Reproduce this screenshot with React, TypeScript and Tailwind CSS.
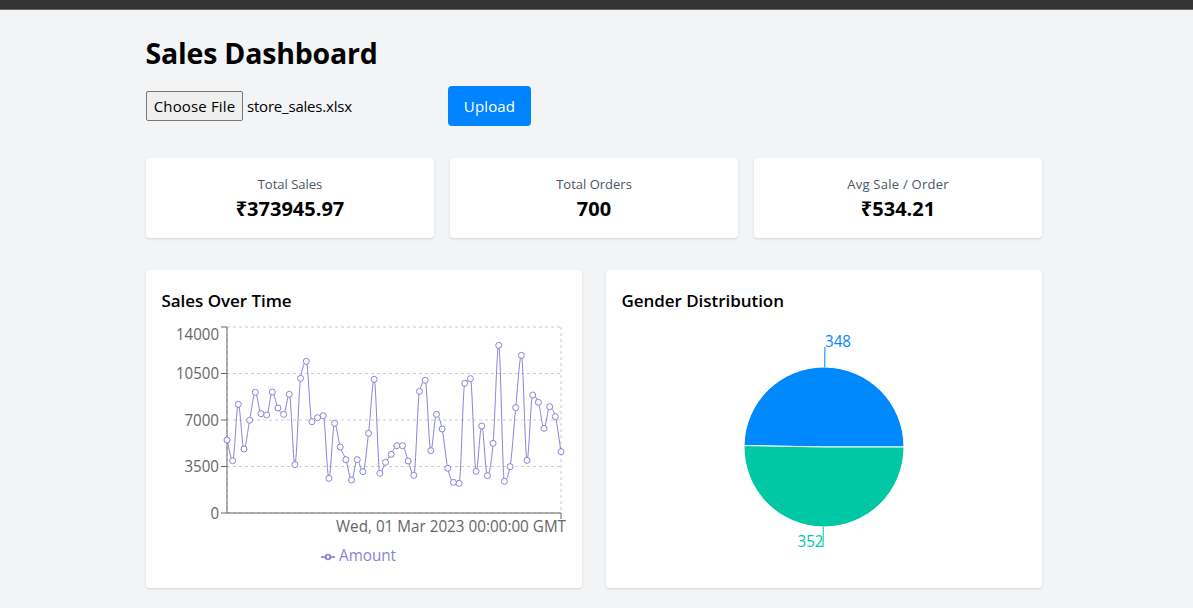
import React from "react";

const PLOT = { left: 65, right: 399, top: 5, bottom: 191 };

// Vertical positions of the daily totals, in thirds of a pixel.
const samples = [
  360, 422, 253, 387, 301, 217, 281, 285, 216, 264, 283, 223, 434, 175, 124, 305, 293, 287, 475, 310,
  381, 419, 480, 419, 455, 340, 178, 460, 427, 403, 377, 377, 423, 466, 214, 181, 392, 283, 327, 445,
  487, 490, 190, 176, 454, 318, 467, 370, 76, 484, 440, 263, 106, 421, 225, 247, 325, 260, 290, 395,
];

type Point = { x: number; y: number };

const points: Point[] = samples.map((s, i) => ({
  x: PLOT.left + (i * (PLOT.right - PLOT.left)) / (samples.length - 1),
  y: s / 3 - 2,
}));

function monotonePath(p: Point[]): string {
  const n = p.length;
  const slope = (i: number) => (p[i + 1].y - p[i].y) / (p[i + 1].x - p[i].x);
  const m = p.map((_, i) => {
    if (i === 0) return slope(0);
    if (i === n - 1) return slope(n - 2);
    const a = slope(i - 1);
    const b = slope(i);
    if (a * b <= 0) return 0;
    return Math.sign(a) * Math.min(Math.abs(a), Math.abs(b), Math.abs(a + b) / 4) * 2;
  });
  let d = `M${p[0].x},${p[0].y}`;
  for (let i = 0; i < n - 1; i++) {
    const dx = (p[i + 1].x - p[i].x) / 3;
    d += `C${p[i].x + dx},${p[i].y + m[i] * dx},${p[i + 1].x - dx},${p[i + 1].y - m[i + 1] * dx},${p[i + 1].x},${p[i + 1].y}`;
  }
  return d;
}

const yTicks = [
  { label: "14000", y: 5, textY: 18, width: 43 },
  { label: "10500", y: 51.5, textY: 57, width: 43 },
  { label: "7000", y: 98, textY: 104, width: 34.5 },
  { label: "3500", y: 144.5, textY: 150, width: 34.5 },
  { label: "0", y: 191, textY: 197, width: 8.6 },
];

function SalesChart() {
  return (
    <svg width="404" height="250" viewBox="0 0 404 250" className="block overflow-visible text-[15.5px]">
      <g stroke="#ccc" strokeDasharray="3 3">
        {yTicks.map((t) => (
          <line key={t.label} x1="65" y1={t.y} x2="399" y2={t.y} />
        ))}
        <line x1="65" y1="5" x2="65" y2="191" />
        <line x1="399" y1="5" x2="399" y2="191" />
      </g>
      <g stroke="#666">
        <line x1="65" y1="191" x2="399" y2="191" />
        <line x1="399" y1="191" x2="399" y2="197" />
        <line x1="65" y1="5" x2="65" y2="191" />
        {yTicks.map((t) => (
          <line key={t.label} x1="59" y1={t.y} x2="65" y2={t.y} />
        ))}
      </g>
      <g fill="#666">
        {yTicks.map((t) => (
          <text key={t.label} x="57" y={t.textY} textAnchor="end" textLength={t.width} lengthAdjust="spacingAndGlyphs">
            {t.label}
          </text>
        ))}
        <text x="404" y="210" textAnchor="end" textLength="230" lengthAdjust="spacingAndGlyphs">
          Wed, 01 Mar 2023 00:00:00 GMT
        </text>
      </g>
      <path d={monotonePath(points)} fill="none" stroke="#8884d8" />
      <g fill="#fff" stroke="#8884d8">
        {points.map((p, i) => (
          <circle key={i} cx={p.x} cy={p.y} r="3" />
        ))}
      </g>
      <g transform="translate(159 228) scale(0.4375)" fill="none" stroke="#8884d8" strokeWidth="4">
        <path d="M0,16h10.667A5.333,5.333,0,1,1,21.333,16H32M21.333,16A5.333,5.333,0,1,1,10.667,16" />
      </g>
      <text x="177" y="239" fill="#8884d8" textLength="57" lengthAdjust="spacingAndGlyphs">
        Amount
      </text>
    </svg>
  );
}

function GenderChart() {
  return (
    <svg width="404" height="250" viewBox="0 0 404 250" className="block overflow-visible text-[15.5px]">
      <g stroke="#fff">
        <path d="M202,125L282,125A80,80,0,0,0,122.013,123.564Z" fill="#0088ff" />
        <path d="M202,125L122.013,123.564A80,80,0,1,0,282,125Z" fill="#00c8a5" />
      </g>
      <line x1="202.72" y1="45" x2="202.9" y2="25" stroke="#0088ff" />
      <line x1="201.28" y1="205" x2="201.1" y2="225" stroke="#00c8a5" />
      <text x="203" y="25" fill="#0088ff" textLength="26" lengthAdjust="spacingAndGlyphs">
        348
      </text>
      <text x="201.5" y="225" fill="#00c8a5" textAnchor="end" textLength="26" lengthAdjust="spacingAndGlyphs">
        352
      </text>
    </svg>
  );
}

function Stat({ label, labelClass, value }: { label: string; labelClass: string; value: string }) {
  return (
    <div className="h-20 rounded bg-white p-4 text-center shadow-sm">
      <p className={`text-[13px] leading-[21px] text-gray-600 ${labelClass}`}>{label}</p>
      <p className="text-xl leading-7 font-bold">{value}</p>
    </div>
  );
}

function ChartCard({ title, children }: { title: string; children: React.ReactNode }) {
  return (
    <div className="h-[318px] rounded bg-white p-4 shadow-sm">
      <h2 className="mb-1.5 -ml-[0.5px] text-[17px] leading-[30px] font-semibold tracking-[-0.05px]">{title}</h2>
      {children}
    </div>
  );
}

export default function App() {
  return (
    <div className="h-[608px] overflow-hidden bg-[#f3f4f6] font-['Open_Sans','Noto_Sans',sans-serif] text-black">
      <div className="h-[10px] border-b border-[#666] bg-[#333]" />
      <main className="ml-[146px] w-[896px] pt-[25px]">
        <h1 className="mb-[15px] -ml-[0.5px] text-[28.5px] leading-9 font-bold tracking-[-0.2px] whitespace-nowrap">
          Sales Dashboard
        </h1>
        <div className="mb-8 flex h-10 items-center text-[15px]">
          <div className="flex w-[302px] items-center gap-1">
            <button className="h-[30px] w-[97px] rounded-[2px] border border-[#767676] bg-[#efefef] tracking-[0.15px] whitespace-nowrap">
              Choose File
            </button>
            <span className="tracking-[-0.2px]">store_sales.xlsx</span>
          </div>
          <button className="h-10 w-[83px] rounded bg-[#0084ff] tracking-[0.15px] text-white">Upload</button>
        </div>
        <div className="mb-8 grid grid-cols-3 gap-4">
          <Stat label="Total Sales" labelClass="tracking-normal" value="₹373945.97" />
          <Stat label="Total Orders" labelClass="tracking-normal" value="700" />
          <Stat label="Avg Sale / Order" labelClass="tracking-[0.25px]" value="₹534.21" />
        </div>
        <div className="grid grid-cols-2 gap-6">
          <ChartCard title="Sales Over Time">
            <SalesChart />
          </ChartCard>
          <ChartCard title="Gender Distribution">
            <GenderChart />
          </ChartCard>
        </div>
      </main>
    </div>
  );
}
